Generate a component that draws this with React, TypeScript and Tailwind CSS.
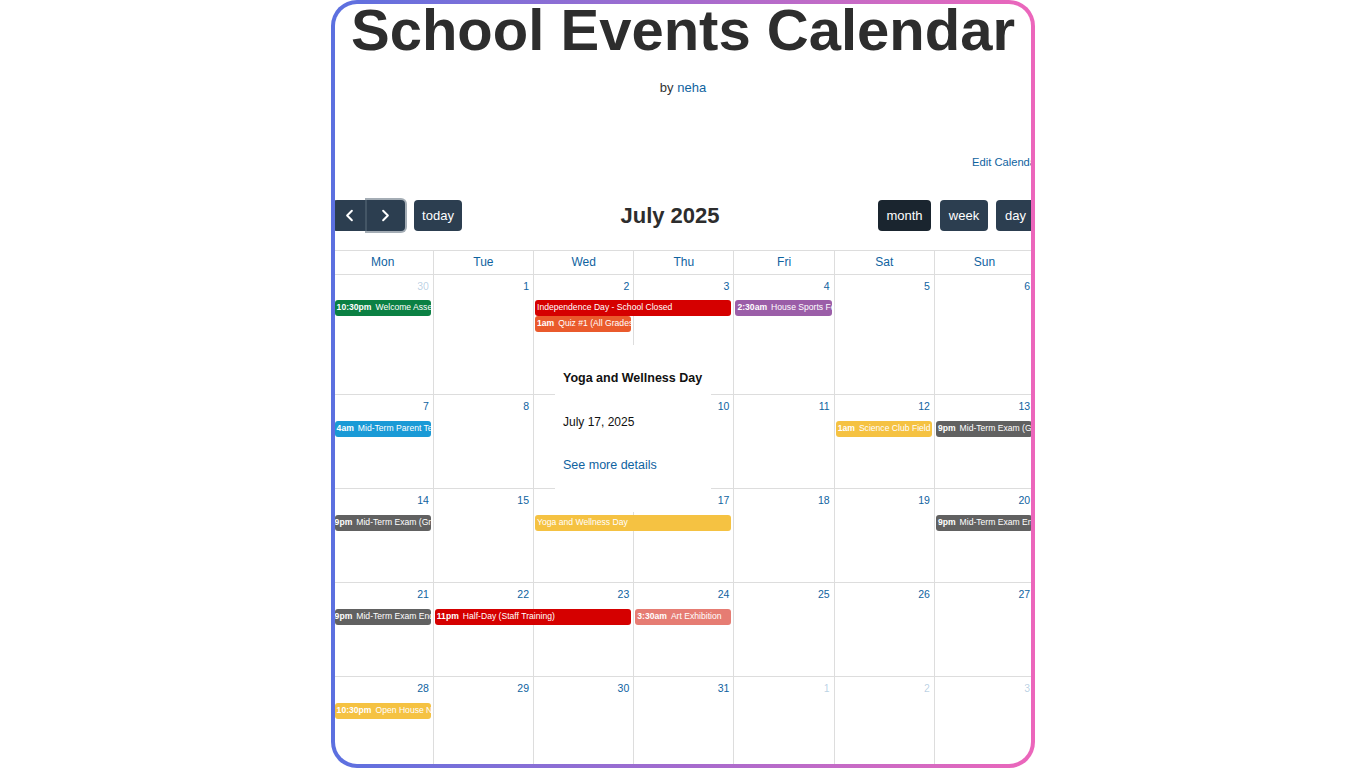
import React from 'react';
import { ChevronLeft, ChevronRight } from 'lucide-react';

type CalEvent = {
  col: string;
  row?: string;
  time?: string;
  title: string;
  color: string;
  cont?: boolean;
};

type Week = {
  height: string;
  rows: string;
  days: { n: number; faded?: boolean }[];
  events: CalEvent[];
};

const colClass = ['col-start-1', 'col-start-2', 'col-start-3', 'col-start-4', 'col-start-5', 'col-start-6', 'col-start-7'];

const range = (from: number, count: number, faded = false) =>
  Array.from({ length: count }, (_, i) => ({ n: from + i, faded }));

const laterRows = 'grid-rows-[26px_16px_16px_1fr]';

const weeks: Week[] = [
  {
    height: 'h-[120px]',
    rows: 'grid-rows-[25px_16px_16px_1fr]',
    days: [...range(30, 1, true), ...range(1, 6)],
    events: [
      { col: 'col-start-1', time: '10:30pm', title: 'Welcome Assembly', color: 'bg-[#0b8043]' },
      { col: 'col-start-3 col-span-2', title: 'Independence Day - School Closed', color: 'bg-[#d50000]' },
      { col: 'col-start-3', row: 'row-start-3', time: '1am', title: 'Quiz #1 (All Grades)', color: 'bg-[#ea5a2c]' },
      { col: 'col-start-5', time: '2:30am', title: 'House Sports Festival', color: 'bg-[#9b5ea8]' },
    ],
  },
  {
    height: 'h-[94px]',
    rows: laterRows,
    days: range(7, 7),
    events: [
      { col: 'col-start-1', time: '4am', title: 'Mid-Term Parent Teacher', color: 'bg-[#1a9ad6]' },
      { col: 'col-start-6', time: '1am', title: 'Science Club Field Trip', color: 'bg-[#f5c242]' },
      { col: 'col-start-7', time: '9pm', title: 'Mid-Term Exam (Grade 9)', color: 'bg-[#616161]' },
    ],
  },
  {
    height: 'h-[94px]',
    rows: laterRows,
    days: range(14, 7),
    events: [
      { col: 'col-start-1', time: '9pm', title: 'Mid-Term Exam (Grade 9)', color: 'bg-[#616161]', cont: true },
      { col: 'col-start-3 col-span-2', title: 'Yoga and Wellness Day', color: 'bg-[#f5c242]' },
      { col: 'col-start-7', time: '9pm', title: 'Mid-Term Exam End', color: 'bg-[#616161]' },
    ],
  },
  {
    height: 'h-[94px]',
    rows: laterRows,
    days: range(21, 7),
    events: [
      { col: 'col-start-1', time: '9pm', title: 'Mid-Term Exam End', color: 'bg-[#616161]', cont: true },
      { col: 'col-start-2 col-span-2', time: '11pm', title: 'Half-Day (Staff Training)', color: 'bg-[#d50000]' },
      { col: 'col-start-4', time: '3:30am', title: 'Art Exhibition', color: 'bg-[#e67c73]' },
    ],
  },
  {
    height: 'h-[94px]',
    rows: laterRows,
    days: [...range(28, 4), ...range(1, 3, true)],
    events: [{ col: 'col-start-1', time: '10:30pm', title: 'Open House Night', color: 'bg-[#f5c242]' }],
  },
];

const dayNames = ['Mon', 'Tue', 'Wed', 'Thu', 'Fri', 'Sat', 'Sun'];

const App: React.FC = () => {
  return (
    <div className="flex h-screen justify-center bg-white font-['Liberation_Sans',Arial,sans-serif]">
      <div className="h-full w-[704px] rounded-[26px] bg-gradient-to-r from-[#5b70e0] via-[#a46bce] to-[#ec66bb] p-1">
        <div className="h-full overflow-hidden rounded-[22px] bg-white">
          {/* Heading */}
          <h1 className="-mt-1 text-center text-[58px] leading-[60px] font-bold text-[#2d2d2d]">School Events Calendar</h1>
          <p className="mt-[20px] text-center text-[13px] leading-[16px] text-[#333]">
            by <span className="text-[#0f639f]">neha</span>
          </p>
          <div className="mt-[58px] flex justify-end whitespace-nowrap">
            <span className="h-[16px] w-[59px] overflow-hidden text-[11.2px] leading-[16px] text-[#0f639f]">Edit Calendar</span>
          </div>

          {/* Calendar */}
          <div className="relative -ml-[2px] mt-[30px] w-[702px]">
            <div className="flex h-[31px] items-center justify-between">
              <div className="flex gap-[9px]">
                <div className="flex">
                  <button className="flex h-[31px] w-[34px] items-center justify-center rounded-l-[4px] bg-[#2c3e50] pr-[2px] text-white">
                    <ChevronLeft size={19} strokeWidth={2.5} />
                  </button>
                  <button className="flex h-[31px] w-[38px] items-center justify-center rounded-r-[4px] bg-[#2c3e50] pr-[2px] text-white shadow-[0_0_0_2px_rgba(90,105,120,0.55)]">
                    <ChevronRight size={19} strokeWidth={2.5} />
                  </button>
                </div>
                <button className="h-[31px] w-[48px] rounded-[4px] bg-[#2c3e50] text-[13px] text-white">today</button>
              </div>
              <div className="text-[22px] leading-[31px] font-bold text-[#2d2d2d]">July 2025</div>
              <div className="flex">
                <button className="h-[31px] w-[53px] rounded-[4px] bg-[#1a252f] text-[13px] text-white">month</button>
                <button className="ml-[9px] h-[31px] w-[48px] rounded-[4px] bg-[#2c3e50] text-[13px] text-white">week</button>
                <button className="ml-[8px] h-[31px] w-[39px] rounded-[4px] bg-[#2c3e50] text-[13px] text-white">day</button>
              </div>
            </div>

            <div className="-ml-[0.4px] w-[701.5px]">
              <div className="mt-[19px] grid h-[25px] grid-cols-7 border-y border-[#ddd]">
                {dayNames.map((d, i) => (
                  <div key={d} className={`text-center text-[12px] leading-[22px] text-[#0f639f] ${i > 0 ? 'border-l border-[#ddd]' : ''}`}>
                    {d}
                  </div>
                ))}
              </div>

              {weeks.map((week, w) => (
                <div key={w} className={`grid grid-cols-7 border-b border-[#ddd] ${week.rows} ${week.height}`}>
                  {week.days.map((day, i) => (
                    <div
                      key={i}
                      className={`row-start-1 row-span-4 px-[4px] pt-[4px] text-right text-[10.5px] leading-[14px] ${colClass[i]} ${i > 0 ? 'border-l border-[#ddd]' : ''} ${day.faded ? 'text-[#0f639f]/30' : 'text-[#0f639f]'}`}
                    >
                      {day.n}
                    </div>
                  ))}
                  {week.events.map((ev, i) => (
                    <div
                      key={i}
                      className={`z-10 mx-[2px] h-[16px] overflow-hidden rounded-[3px] whitespace-nowrap text-[8.6px] leading-[15px] text-white ${ev.cont ? 'pl-[0px]' : 'pl-[2px]'} ${ev.col} ${ev.row ?? 'row-start-2'} ${ev.color}`}
                    >
                      {ev.time && <b className="mr-[4px] font-bold">{ev.time}</b>}
                      {ev.title}
                    </div>
                  ))}
                </div>
              ))}
            </div>

            {/* Popover */}
            <div className="absolute left-[222px] top-[145px] z-20 h-[167px] w-[156px] bg-white px-[8px] pt-[25px]">
              <div className="text-[12.5px] leading-[16px] font-bold text-[#111]">Yoga and Wellness Day</div>
              <div className="mt-[28px] text-[12px] leading-[16px] text-[#111]">July 17, 2025</div>
              <div className="mt-[27px] text-[12.5px] leading-[16px] text-[#0f639f]">See more details</div>
            </div>
          </div>
        </div>
      </div>
    </div>
  );
};

export default App;
